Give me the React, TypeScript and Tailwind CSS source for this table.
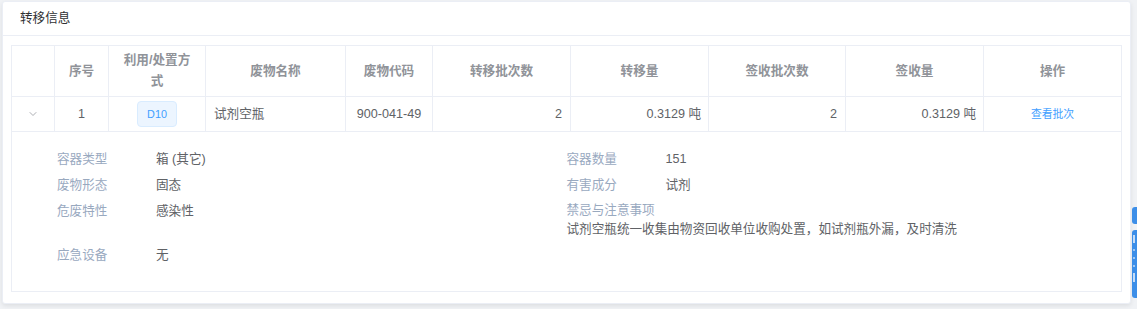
import { ChevronDown } from 'lucide-react'

const cols = [43, 54, 97, 140, 87, 138, 138, 137, 138, 138]

const headers = ['', '序号', '利用/处置方式', '废物名称', '废物代码', '转移批次数', '转移量', '签收批次数', '签收量', '操作']

const details: { label: string; value: string; stacked?: boolean }[] = [
  { label: '容器类型', value: '箱 (其它)' },
  { label: '容器数量', value: '151' },
  { label: '废物形态', value: '固态' },
  { label: '有害成分', value: '试剂' },
  { label: '危废特性', value: '感染性' },
  { label: '禁忌与注意事项', value: '试剂空瓶统一收集由物资回收单位收购处置，如试剂瓶外漏，及时清洗', stacked: true },
  { label: '应急设备', value: '无' },
]

export default function App() {
  return (
    <div
      className="relative h-[309px] w-[1137px] overflow-hidden bg-[#f0f2f5] pl-[2px] pt-[1px]"
      style={{ fontFamily: '"Liberation Sans", "Noto Sans CJK SC", sans-serif' }}
    >
      <div className="h-[303px] w-[1129px] rounded-[3px] border border-[#ebeef5] bg-white shadow-[0_2px_4px_rgba(0,0,0,0.08)]">
        <div className="flex h-[34px] items-center border-b border-[#ebeef5] px-[17px] text-[12.6px] text-[#303133]">
          转移信息
        </div>
        <div className="px-[8px] pt-[9px]">
          <TransferTable />
        </div>
      </div>

      {/* floating side tabs, mostly off-screen */}
      <div className="absolute left-[1132px] top-[207px] h-[17px] w-[12px] rounded-[3px] bg-[#3c8ee8]" />
      <div className="absolute left-[1132px] top-[230px] flex h-[68px] w-[12px] flex-col items-start gap-[6px] overflow-hidden rounded-[3px] bg-[#3c8ee8] pl-[1px] pt-[5px]">
        <span className="block h-[8px] w-[2px] bg-white/70" />
        <span className="block h-[2px] w-[2px] bg-white/50" />
        <span className="block h-[2px] w-[2px] bg-white/50" />
        <span className="block h-[2px] w-[2px] bg-white/50" />
        <span className="block h-[9px] w-[2px] bg-white/70" />
      </div>
    </div>
  )
}

function TransferTable() {
  return (
    <table className="w-[1111px] table-fixed border-collapse border border-[#ebeef5] text-[12.6px]">
      <colgroup>
        {cols.map((w, i) => (
          <col key={i} style={{ width: w }} />
        ))}
      </colgroup>
      <thead>
        <tr className="h-[51px]">
          {headers.map((h, i) => (
            <th
              key={i}
              className="border border-[#ebeef5] px-[9px] text-center align-middle text-[12.6px] leading-[21px] font-bold text-[#909399]"
            >
              {h}
            </th>
          ))}
        </tr>
      </thead>
      <tbody className="text-[#606266]">
        <tr className="h-[35px]">
          <td className="border border-[#ebeef5] text-center">
            <ChevronDown className="mx-auto h-[12px] w-[12px] text-[#909399]" strokeWidth={1.5} />
          </td>
          <td className="border border-[#ebeef5] text-center">1</td>
          <td className="border border-[#ebeef5] text-center">
            <span className="inline-flex h-[26px] w-[40px] items-center justify-center rounded-[4px] border border-[#d9ecff] bg-[#ecf5ff] text-[10.8px] text-[#409eff]">
              D10
            </span>
          </td>
          <td className="border border-[#ebeef5] pl-[8px]">试剂空瓶</td>
          <td className="border border-[#ebeef5] text-center">900-041-49</td>
          <td className="border border-[#ebeef5] pr-[8px] text-right">2</td>
          <td className="border border-[#ebeef5] pr-[7px] text-right">0.3129 吨</td>
          <td className="border border-[#ebeef5] pr-[8px] text-right">2</td>
          <td className="border border-[#ebeef5] pr-[7px] text-right">0.3129 吨</td>
          <td className="border border-[#ebeef5] text-center text-[10.8px] text-[#409eff]">查看批次</td>
        </tr>
        <tr>
          <td colSpan={10} className="h-[160px] border border-[#ebeef5] px-[45px] pt-[17px] align-top">
            <div className="grid grid-cols-2 gap-y-[6px] text-[12.6px] leading-[20px]">
              {details.map((d) =>
                d.stacked ? (
                  <div key={d.label} className="leading-[19px]">
                    <div className="text-[#99a9bf]">{d.label}</div>
                    <div className="text-[#606266]">{d.value}</div>
                  </div>
                ) : (
                  <div key={d.label} className="flex">
                    <div className="w-[99px] shrink-0 text-[#99a9bf]">{d.label}</div>
                    <div className="text-[#606266]">{d.value}</div>
                  </div>
                )
              )}
            </div>
          </td>
        </tr>
      </tbody>
    </table>
  )
}
